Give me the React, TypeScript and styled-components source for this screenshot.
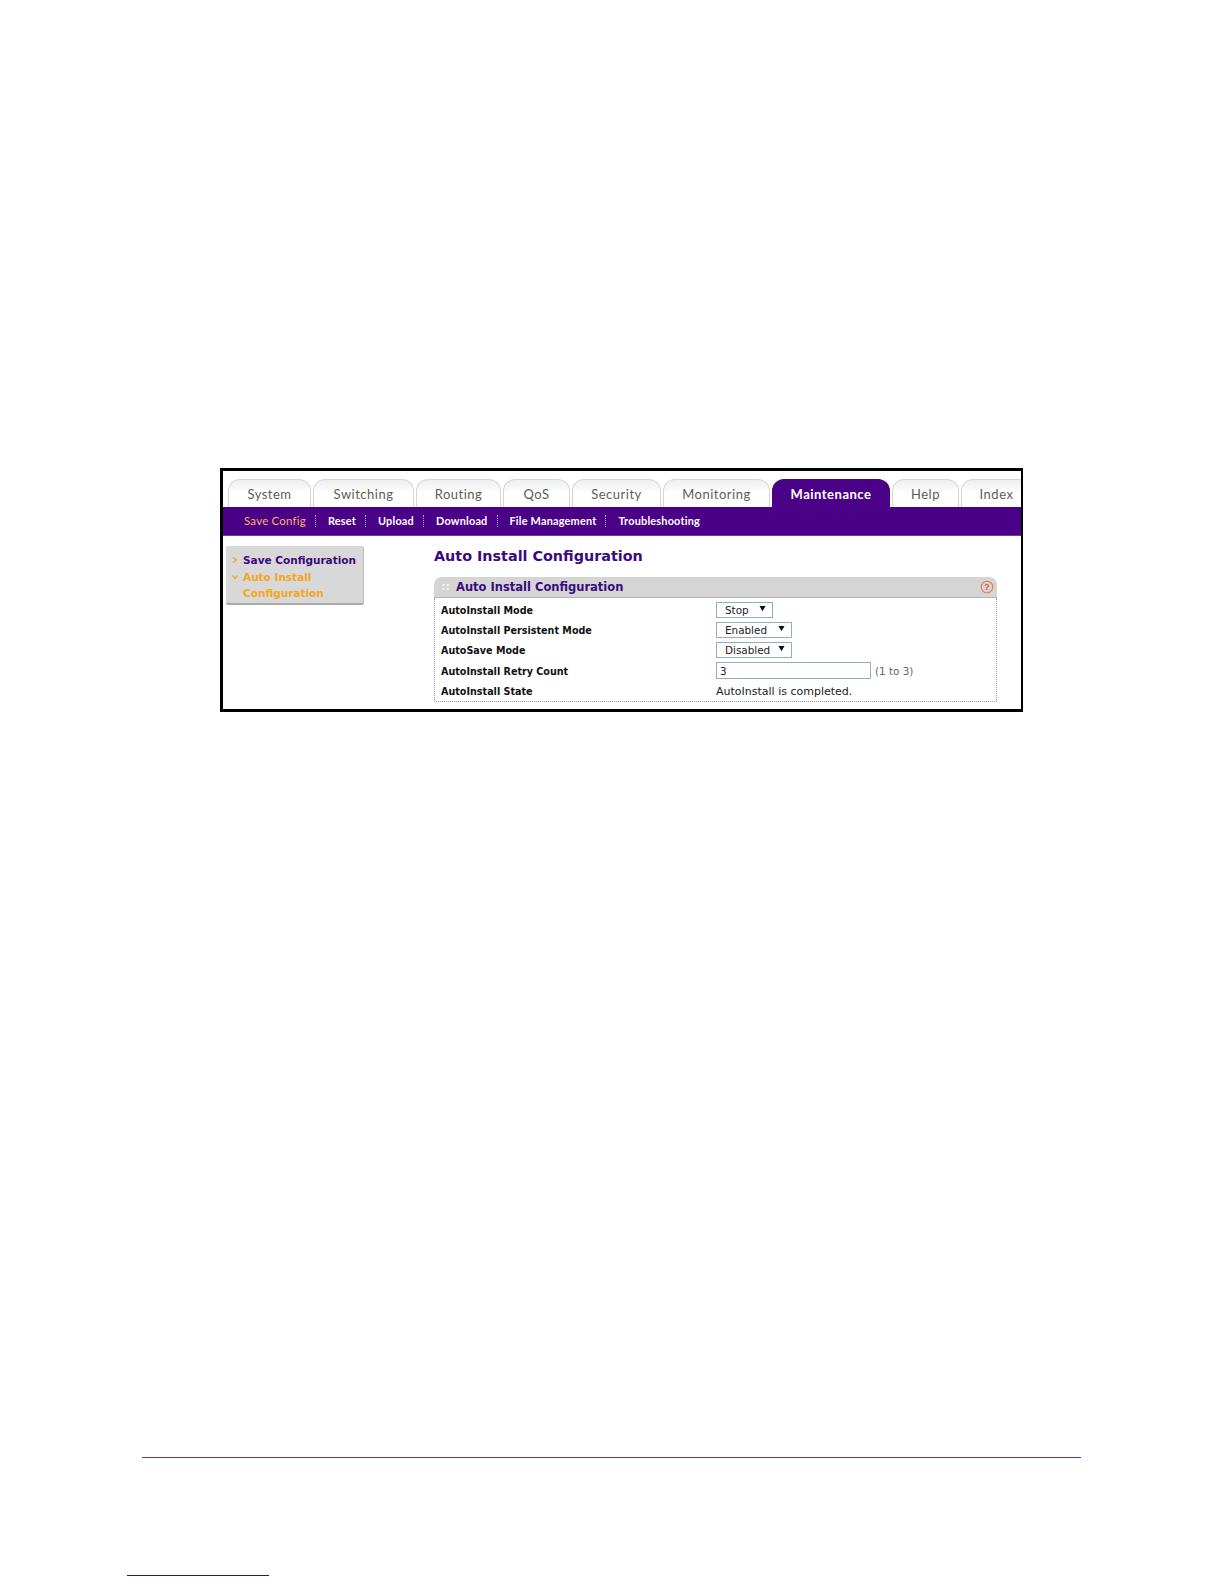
import styled, { createGlobalStyle } from "styled-components";

const tabs = [
  { label: "System", width: 83 },
  { label: "Switching", width: 101 },
  { label: "Routing", width: 85 },
  { label: "QoS", width: 67 },
  { label: "Security", width: 89 },
  { label: "Monitoring", width: 107 },
  { label: "Maintenance", width: 118, active: true },
  { label: "Help", width: 67 },
  { label: "Index", width: 71 },
];

const subLinks = [
  { label: "Save Config", active: true },
  { label: "Reset" },
  { label: "Upload" },
  { label: "Download" },
  { label: "File Management" },
  { label: "Troubleshooting" },
];

const rows = [
  { label: "AutoInstall Mode", select: "Stop", width: 57 },
  { label: "AutoInstall Persistent Mode", select: "Enabled", width: 76 },
  { label: "AutoSave Mode", select: "Disabled", width: 76 },
  { label: "AutoInstall Retry Count", input: "3" },
  { label: "AutoInstall State", text: "AutoInstall is completed." },
];

export default function App() {
  return (
    <Page>
      <GlobalStyle />
      <Frame>
        <TabRow>
          {tabs.map((t) => (
            <Tab key={t.label} $width={t.width} $active={t.active}>
              {t.label}
            </Tab>
          ))}
        </TabRow>
        <SubNav>
          {subLinks.map((l) => (
            <SubLink key={l.label} $active={l.active}>
              {l.label}
            </SubLink>
          ))}
        </SubNav>
        <Body>
          <SideMenu>
            <SideItem>
              <Chevron viewBox="0 0 6 6">
                <path d="M1 0.5 L4.5 3 L1 5.5" />
              </Chevron>
              Save Configuration
            </SideItem>
            <SideItem $active>
              <Chevron viewBox="0 0 6 6">
                <path d="M0.5 1.5 L3 4.5 L5.5 1.5" />
              </Chevron>
              Auto Install
              <br />
              Configuration
            </SideItem>
          </SideMenu>
          <Main>
            <Title>Auto Install Configuration</Title>
            <Panel>
              <PanelHead>
                <Grip>::</Grip>
                <PanelTitle>Auto Install Configuration</PanelTitle>
                <HelpIcon viewBox="0 0 14 14">
                  <circle cx="7" cy="7" r="5.8" />
                  <text x="7" y="10.2" textAnchor="middle">?</text>
                </HelpIcon>
              </PanelHead>
              <PanelBody>
                {rows.map((r) => (
                  <Row key={r.label}>
                    <RowLabel>{r.label}</RowLabel>
                    {r.select && (
                      <SelectBox $width={r.width!}>
                        {r.select}
                        <Arrow viewBox="0 0 8 7">
                          <path d="M0.5 0.5 H7.5 L4 6.5 Z" />
                        </Arrow>
                      </SelectBox>
                    )}
                    {r.input && (
                      <>
                        <InputBox>{r.input}</InputBox>
                        <Hint>(1 to 3)</Hint>
                      </>
                    )}
                    {r.text && <Value>{r.text}</Value>}
                  </Row>
                ))}
              </PanelBody>
            </Panel>
          </Main>
        </Body>
      </Frame>
      <FooterRule />
      <PageLink />
    </Page>
  );
}

const GlobalStyle = createGlobalStyle`
  html, body {
    margin: 0;
    padding: 0;
    background: #ffffff;
  }
`;

const Page = styled.div`
  display: flex;
  flex-direction: column;
  width: 1224px;
  height: 1584px;
  padding-top: 468px;
  box-sizing: border-box;
  overflow: hidden;
`;

const Frame = styled.section`
  width: 803px;
  height: 244px;
  margin-left: 220px;
  border: 3px solid #000000;
  border-right-width: 2px;
  box-sizing: border-box;
  overflow: hidden;
  background: #ffffff;
`;

const TabRow = styled.div`
  display: flex;
  align-items: flex-end;
  gap: 2px;
  height: 36px;
  padding-left: 5px;
  white-space: nowrap;
`;

const Tab = styled.div<{ $width: number; $active?: boolean }>`
  flex: none;
  width: ${(p) => p.$width}px;
  height: 28px;
  box-sizing: border-box;
  border: 1px solid ${(p) => (p.$active ? "#4b0088" : "#d6d6d6")};
  border-bottom: none;
  border-radius: 12px 12px 0 0;
  background: ${(p) =>
    p.$active ? "#4b0088" : "linear-gradient(#eeeeee, #ffffff 50%)"};
  color: ${(p) => (p.$active ? "#ffffff" : "#5c5c5c")};
  font: ${(p) => (p.$active ? 700 : 400)} 13px/29px Lato, "Noto Sans", sans-serif;
  letter-spacing: 0.5px;
  text-align: center;
`;

const SubNav = styled.nav`
  display: flex;
  align-items: center;
  height: 29px;
  padding-left: 21px;
  background: #4b0088;
  box-sizing: border-box;
  border-bottom: 1px solid #6a3a9c;
`;

const SubLink = styled.a<{ $active?: boolean }>`
  padding-right: 9px;
  margin-right: 12px;
  border-right: 1px dotted #b9a3cf;
  color: ${(p) => (p.$active ? "#ffb266" : "#ffffff")};
  font: ${(p) => (p.$active ? 400 : 700)} ${(p) => (p.$active ? 11.5 : 10.9)}px/12px Lato, "Noto Sans", sans-serif;
  letter-spacing: 0.2px;

  &:last-child {
    border-right: none;
  }
`;

const Body = styled.div`
  display: flex;
  padding-top: 10px;
`;

const SideMenu = styled.div`
  flex: none;
  width: 138px;
  height: 59px;
  margin-left: 3px;
  padding: 6px 0 0 6px;
  box-sizing: border-box;
  background: #d8d8d8;
  border-radius: 2px;
  border-bottom: 2px solid #aaaaaa;
  border-right: 1px solid #bbbbbb;
`;

const SideItem = styled.div<{ $active?: boolean }>`
  position: relative;
  padding-left: 11px;
  color: ${(p) => (p.$active ? "#f5a623" : "#3b0a80")};
  font: 700 10.5px/16.5px "DejaVu Sans", sans-serif;
  white-space: nowrap;
`;

const Chevron = styled.svg`
  position: absolute;
  left: 0;
  top: 5px;
  width: 6px;
  height: 6px;
  fill: none;
  stroke: #f5a623;
  stroke-width: 1.3;
`;

const Main = styled.div`
  flex: none;
  width: 563px;
  margin-left: 70px;
`;

const Title = styled.h1`
  margin: 0;
  color: #3b0a80;
  font: 700 14.35px/20px "DejaVu Sans", sans-serif;
`;

const Panel = styled.div`
  margin-top: 11px;
`;

const PanelHead = styled.div`
  display: flex;
  align-items: center;
  height: 21px;
  padding: 0 3px 0 7px;
  box-sizing: border-box;
  background: #d5d5d5;
  border-radius: 8px 8px 0 0;
  border-bottom: 1px solid #b5b5b5;
`;

const Grip = styled.span`
  width: 15px;
  color: #f2f2f2;
  font: 700 11px/14px "DejaVu Sans", sans-serif;
`;

const PanelTitle = styled.span`
  flex: 1;
  color: #3b0a80;
  font: 700 11.5px/16px "DejaVu Sans", sans-serif;
`;

const HelpIcon = styled.svg`
  width: 14px;
  height: 14px;
  fill: none;
  stroke: #e8764a;
  stroke-width: 1.1;

  text {
    fill: #d9603a;
    stroke: none;
    font: 700 9px "Liberation Sans", sans-serif;
  }
`;

const PanelBody = styled.div`
  padding: 3px 0 0 6px;
  height: 104px;
  box-sizing: border-box;
  border: 1px dotted #9a9a9a;
  border-top: none;
`;

const Row = styled.div`
  display: flex;
  align-items: center;
  height: 20.2px;
`;

const RowLabel = styled.span`
  flex: none;
  width: 275px;
  color: #111111;
  font: 700 9.6px/12px "DejaVu Sans", sans-serif;
`;

const SelectBox = styled.div<{ $width: number }>`
  position: relative;
  width: ${(p) => p.$width}px;
  height: 16px;
  margin-bottom: 2px;
  padding-left: 8px;
  box-sizing: border-box;
  border: 1px solid #8fb0bf;
  color: #222222;
  font: 400 10.4px/14px "DejaVu Sans", sans-serif;
`;

const Arrow = styled.svg`
  position: absolute;
  right: 6px;
  top: 2px;
  width: 7px;
  height: 7px;
  fill: #111111;
`;

const InputBox = styled.div`
  width: 155px;
  height: 17px;
  margin-bottom: 2px;
  padding-left: 3px;
  box-sizing: border-box;
  border: 1px solid #8fb0bf;
  color: #222222;
  font: 400 10.4px/16px "DejaVu Sans", sans-serif;
`;

const Hint = styled.span`
  margin: 0 0 2px 4px;
  color: #666666;
  font: 400 10.4px/12px "DejaVu Sans", sans-serif;
`;

const Value = styled.span`
  color: #222222;
  font: 400 11px/12px "DejaVu Sans", sans-serif;
`;

const FooterRule = styled.div`
  width: 939px;
  height: 1px;
  margin: 745px 0 0 142px;
  background: #7b2d8e;
`;

const PageLink = styled.div`
  width: 142px;
  height: 1px;
  margin: 117px 0 0 127px;
  background: #1a1a9c;
`;
